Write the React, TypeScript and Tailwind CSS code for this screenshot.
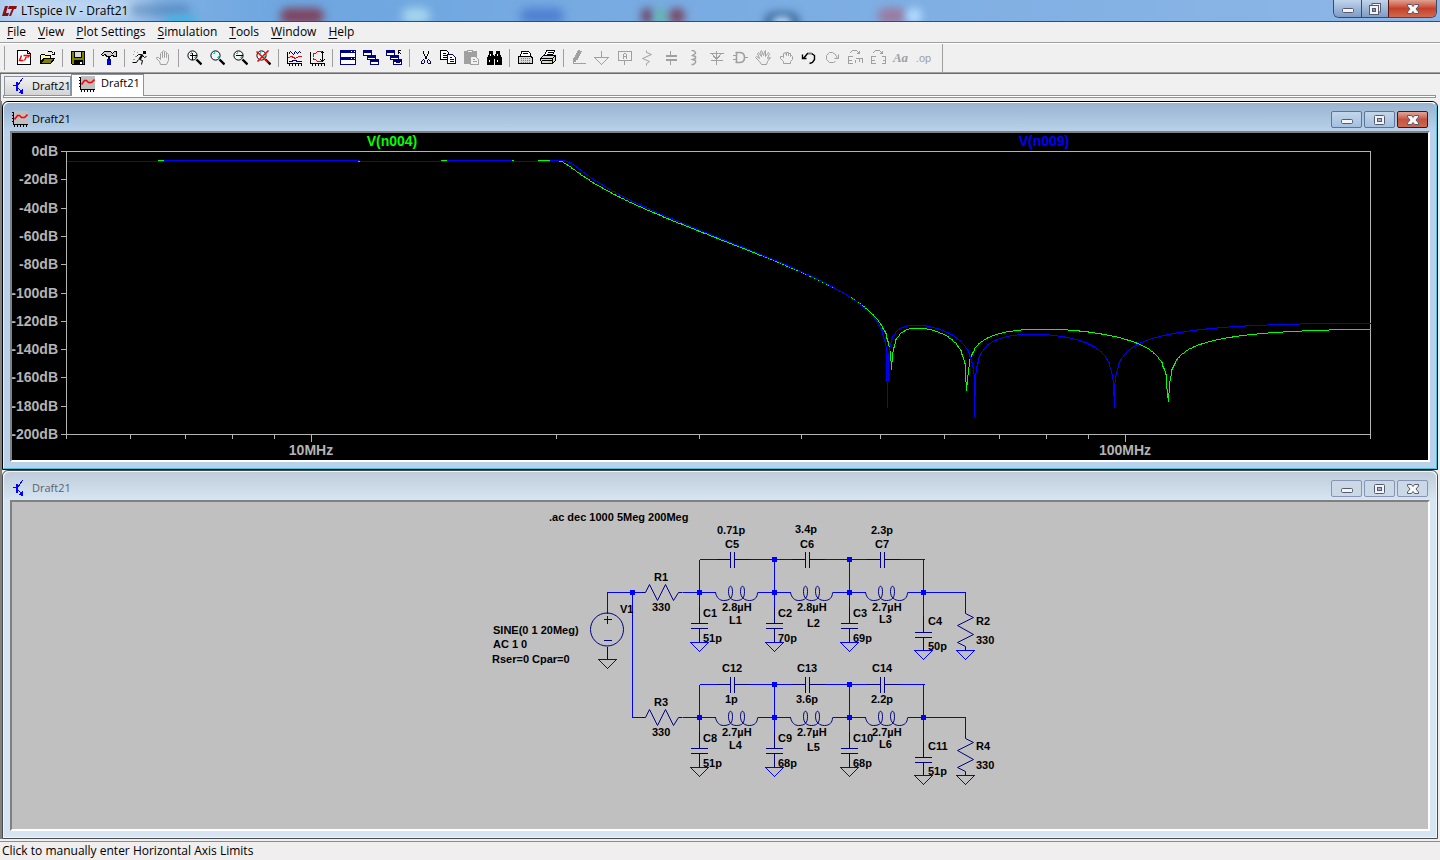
import type { ReactNode } from 'react';
import clsx from 'clsx';

/* ---------- pixel icons ---------- */

const GRAY = '#a0a0a0';
const NAVY = '#000080';

const Px = ({ children, stroke = '#000', size = 16 }: { children: ReactNode; stroke?: string; size?: number }) => (
  <svg
    width={size}
    height={size}
    viewBox="-0.5 -0.5 16 16"
    fill="none"
    stroke={stroke}
    shapeRendering="crispEdges"
    aria-hidden="true"
    className="shrink-0"
  >
    {children}
  </svg>
);

const ChartIcon = () => (
  <Px>
    <rect x="1" y="-0.5" width="14.5" height="13" fill="#c0c0c0" stroke="none" />
    <path d="M1 0V13M-1 1H1M-1 4H1M-1 7H1M-1 10H1M1 13H15M2 13V15M5 13V15M8 13V15M11 13V15M14 13V15" />
    <path d="M2 8L5 4H7L9 6H12L15 3" stroke="#f00" strokeWidth="1.6" shapeRendering="auto" />
  </Px>
);

const TransistorIcon = () => (
  <Px stroke="#00f">
    <path d="M0 7H4M5 7L10 0M5 9L10 14" />
    <path d="M4 3V12" strokeWidth="2" />
    <path d="M10 15V11L7 14Z" fill="#00f" />
  </Px>
);

const Magnifier = ({ children }: { children?: ReactNode }) => (
  <Px>
    <g transform="translate(1 0)">
      <circle cx="5" cy="5" r="4.6" fill="#eefafa" shapeRendering="auto" />
      <path d="M3 3L5 2M7 8L8 6" stroke="#00e0e0" />
      <path d="M9 9L14 14" strokeWidth="2.4" shapeRendering="auto" />
      {children}
    </g>
  </Px>
);

const OpenHand = () => (
  <Px stroke={GRAY}>
    <path
      d="M5 14L4 11L1 8V7H3L5 9V3L6 2L7 3V7V1L8 0L9 1V7V2L10 1L11 2V7V4L12 3L13 4V10L11 14Z"
      shapeRendering="auto"
    />
  </Px>
);

const MiniWindows = () => (
  <>
    <path d="M0 0H8V5H0ZM4 5H12V9H4ZM7 9H15V14H7Z" fill="#fff" />
    <path d="M0 1H8M4 6H12M7 10H15" strokeWidth="2" />
  </>
);

const icons: Record<string, ReactNode> = {
  'New Schematic': (
    <Px>
      <path d="M1 0H11L14 3V14H1Z" fill="#fff" />
      <path d="M11 0V3H14" />
      <path d="M5 5L3 10H7M10 6L8 10" stroke="#f00" strokeWidth="1.4" shapeRendering="auto" />
      <path d="M7 5H13L11 7" stroke="#f00" strokeWidth="1.4" shapeRendering="auto" />
    </Px>
  ),
  Open: (
    <Px>
      <path d="M1 12V5L2 4H5L6 5H11V8H4Z" fill="#ffffa0" />
      <path d="M1 13L5 8H15L11 13Z" fill="#808000" />
      <path d="M8 2L9 1H12L14 3M15 1V4H12" />
    </Px>
  ),
  Save: (
    <Px>
      <path d="M1 1H14V14H2L1 13Z" fill="#808000" />
      <path d="M4 1H11V7H4Z" fill="#d8d8d8" />
      <rect x="3.5" y="9.5" width="9" height="5" fill="#000" stroke="none" />
      <path d="M10 11V13" stroke="#fff" strokeWidth="2" />
    </Px>
  ),
  'Control Panel': (
    <Px>
      <path d="M0 4L3 1H9L11 3L13 1H15V6H13L11 5H10L9 6H5L4 4L1 5Z" fill="#d0d0d0" />
      <path d="M7 6V9" strokeWidth="2" />
      <rect x="6" y="9" width="3" height="5" fill="#00f" stroke="#00a" />
    </Px>
  ),
  Run: (
    <Px>
      <path d="M12 0V3" strokeWidth="3" />
      <path d="M10 4L7 9" strokeWidth="2.4" shapeRendering="auto" />
      <path d="M9 4H6L4 6M10 5L12 7L14 6M7 9L10 10L9 14M6 9L4 12H0" shapeRendering="auto" />
      <path d="M1 1H2M0 4H1M4 2H5M2 6H3M0 9H2" stroke={GRAY} />
    </Px>
  ),
  Halt: <OpenHand />,
  'Zoom In': (
    <Magnifier>
      <path d="M5 2V9M2 5H9" />
    </Magnifier>
  ),
  Pan: <Magnifier />,
  'Zoom Out': (
    <Magnifier>
      <path d="M2 5H9" />
    </Magnifier>
  ),
  'Zoom Full': (
    <Magnifier>
      <path d="M0 1L12 12M12 0L1 11" stroke="#f00" strokeWidth="1.6" shapeRendering="auto" />
    </Magnifier>
  ),
  Autorange: (
    <Px>
      <path d="M1 1V13H15M0 3H1M0 6H1M0 9H1M0 12H1M3 13V15M6 13V15M9 13V15M12 13V15M15 13V15" />
      <path d="M2 4L4 1L7 4L9 1L11 3L13 1L15 3" stroke={NAVY} />
      <path d="M2 7L5 6L9 8L12 6H15" stroke="#f00" />
      <path d="M2 11H6V10H10V11H15" stroke={NAVY} />
    </Px>
  ),
  'Plot Limits': (
    <Px>
      <path d="M1 1V13H15M0 3H1M0 6H1M0 9H1M0 12H1M3 13V15M6 13V15M9 13V15M12 13V15M15 13V15" />
      <path d="M4 6V3H6L8 1H12M4 7V9H6L8 11H12" stroke="#f00" />
      <path d="M13 1V11M11 3L13 1L15 3M11 9L13 11L15 9" />
    </Px>
  ),
  Tile: (
    <Px stroke={NAVY}>
      <path d="M0 0H15V7H0ZM0 7H15V14H0Z" fill="#fff" />
      <path d="M0 1H15M0 8H15" strokeWidth="3" />
      <path d="M10 1H11M13 1H14M10 8H11M13 8H14" stroke="#fff" />
    </Px>
  ),
  Cascade: (
    <Px stroke={NAVY}>
      <MiniWindows />
    </Px>
  ),
  'Close All': (
    <Px stroke={NAVY}>
      <MiniWindows />
      <path d="M9 12H13" />
      <path d="M11 0H14M12 0V3M12 1L15 4" stroke="#000" />
    </Px>
  ),
  Cut: (
    <Px>
      <path d="M6 0V3L10 9M11 0V3L7 9" />
      <path d="M6 9L4 11V13H6L7 12V9M10 9V12L11 13H13V11L11 9" stroke={NAVY} />
    </Px>
  ),
  Copy: (
    <Px>
      <path d="M0 0H6L8 2V9H0Z" fill="#fff" />
      <path d="M2 3H5M2 5H6M2 7H6" />
      <path d="M7 4H12L15 7V13H7Z" fill="#fff" stroke={NAVY} />
      <path d="M9 7H11M9 9H13M9 11H13" stroke={NAVY} />
    </Px>
  ),
  Paste: (
    <Px stroke={GRAY}>
      <path d="M1 1H13V6H7V13H1Z" fill={GRAY} />
      <path d="M4 0H9V2H4Z" fill="#f0f0f0" />
      <path d="M7 6H12L15 9V14H7Z" fill="#f0f0f0" />
      <path d="M9 9H11M9 11H13" />
    </Px>
  ),
  Find: (
    <Px>
      <path d="M3 1H6V4L7 6V14H1V8L3 4ZM10 1H13V4L15 8V14H9V6Z" fill="#000" />
      <path d="M6 7H10" strokeWidth="3" />
      <path d="M4 3V5M11 3V5M3 9V11M11 9V11" stroke="#fff" />
    </Px>
  ),
  'Print Setup': (
    <Px>
      <path d="M3 6L4 1H11L13 3V6" fill="#fff" />
      <path d="M1 6H14L15 8V13H1Z" fill="#d8d8d8" />
      <path d="M5 3H10" />
      <path d="M3 8H13M3 10H13M3 12H13" strokeDasharray="1 1" stroke="#808080" />
    </Px>
  ),
  Print: (
    <Px>
      <path d="M4 5L6 0H14L12 5Z" fill="#fff" />
      <path d="M7 2H12M6 4H11" />
      <path d="M0 8L3 5H15V10L12 13H1Z" fill="#d8d8d8" />
      <path d="M0 8H12V13M12 8L15 5M1 10H11" />
      <path d="M8 11H10" stroke="#e0e000" strokeWidth="2" />
    </Px>
  ),
  Wire: (
    <Px stroke={GRAY}>
      <path d="M2 9L7 0L10 1L5 10L2 12Z" fill={GRAY} />
      <path d="M1 13H14" />
    </Px>
  ),
  Ground: (
    <Px stroke={GRAY}>
      <path d="M7 0V7M0 7H14L7 14Z" />
      <path d="M1 8L7 14L13 8" />
    </Px>
  ),
  'Label Net': (
    <Px stroke={GRAY}>
      <path d="M1 1H14V10H1ZM7 10V14" strokeWidth="1.4" />
      <path d="M6 8V4L7 3H8L9 4V8M6 6H9" />
    </Px>
  ),
  Resistor: (
    <Px stroke={GRAY}>
      <path d="M6 0V2L11 4L2 8L9 11L6 13V15" shapeRendering="auto" />
    </Px>
  ),
  Capacitor: (
    <Px stroke={GRAY}>
      <path d="M7 0V5M7 9V14" />
      <path d="M2 5.5H13M2 9.5H13" strokeWidth="2" />
    </Px>
  ),
  Inductor: (
    <Px stroke={GRAY}>
      <path d="M5 0H7L9 2V3L6 5L9 6V8L6 9L9 10V12L7 14H5" shapeRendering="auto" strokeWidth="1.4" />
    </Px>
  ),
  Diode: (
    <Px stroke={GRAY}>
      <path d="M7 0V14M0 3H14M2 3L7 9L12 3M1 10H13" />
      <path d="M3 4L7 9L11 4" />
    </Px>
  ),
  Component: (
    <Px stroke={GRAY}>
      <path d="M0 5H3M0 9H3M12 7H15" />
      <path d="M3 2H7C10 2 12 4 12 7C12 10 10 12 7 12H3M4 2V12" strokeWidth="1.6" shapeRendering="auto" />
    </Px>
  ),
  Move: (
    <Px stroke={GRAY}>
      <path
        d="M6 14L4 11L0 7L1 6L4 8L2 3L3 2L6 6L5 1L6 0L8 5L9 1L10 0V6L13 2L14 3L12 8L15 7L12 11L11 14Z"
        shapeRendering="auto"
      />
    </Px>
  ),
  Drag: (
    <Px stroke={GRAY}>
      <path
        d="M5 13V11L2 8V6H4L5 7V3L7 2L8 5V2H10V5V3H12V6L13 5L14 6V9L12 11V13Z"
        shapeRendering="auto"
      />
    </Px>
  ),
  Undo: (
    <Px>
      <path d="M1 4V8H5M2 8L6 3H10L13 5V9L11 12L8 13" strokeWidth="1.4" shapeRendering="auto" />
      <path d="M6 3H10" stroke="#808000" />
    </Px>
  ),
  Redo: (
    <Px stroke={GRAY}>
      <path d="M14 4V8H10M13 8L11 4L8 2H5L2 5V9L5 12H9L11 11" shapeRendering="auto" />
    </Px>
  ),
  Rotate: (
    <Px stroke={GRAY}>
      <path d="M2 3L5 0H9L12 3M12 0V3H9" />
      <path d="M5 6H1V13H5M1 10H4M8 9V12M8 8H15V12M12 8V11" strokeWidth="1.4" />
    </Px>
  ),
  Mirror: (
    <Px stroke={GRAY}>
      <path d="M2 3L5 0H9L12 3M12 0V3H9" />
      <path d="M5 6H1V13H5M1 10H4M11 6H15V13H11M15 10H12" strokeWidth="1.4" />
    </Px>
  ),
  Text: <span className="font-['Liberation_Serif',serif] text-[13px] font-bold italic text-[#a0a0a0]">Aa</span>,
  'SPICE Directive': <span className="font-['Liberation_Sans',sans-serif] text-[11px] text-[#a0a0a0]">.op</span>,
};

const toolbar = [
  ['New Schematic', 'Open'],
  ['Save'],
  ['Control Panel'],
  ['Run', 'Halt'],
  ['Zoom In', 'Pan', 'Zoom Out', 'Zoom Full'],
  ['Autorange', 'Plot Limits'],
  ['Tile', 'Cascade', 'Close All'],
  ['Cut', 'Copy', 'Paste', 'Find'],
  ['Print Setup', 'Print'],
  [
    'Wire', 'Ground', 'Label Net', 'Resistor', 'Capacitor', 'Inductor', 'Diode', 'Component',
    'Move', 'Drag', 'Undo', 'Redo', 'Rotate', 'Mirror', 'Text', 'SPICE Directive',
  ],
];

/* ---------- window chrome ---------- */

const MinimizeGlyph = () => (
  <svg width="12" height="12" viewBox="0 0 12 12" aria-hidden="true">
    <rect x="0.5" y="5.5" width="11" height="4" rx="1" fill="#f4f4f4" stroke="#565a6e" />
  </svg>
);

const MaximizeGlyph = () => (
  <svg width="12" height="12" viewBox="0 0 12 12" aria-hidden="true">
    <rect x="0.5" y="1.5" width="10" height="9" rx="1" fill="#f4f4f4" stroke="#565a6e" />
    <rect x="3.5" y="4.5" width="4" height="3" fill="#9db6d6" stroke="#565a6e" />
  </svg>
);

const RestoreGlyph = () => (
  <svg width="12" height="12" viewBox="0 0 12 12" aria-hidden="true">
    <rect x="3" y="0.5" width="8.5" height="8.5" fill="#f4f4f4" stroke="#565a6e" />
    <rect x="0.5" y="2.5" width="9" height="9" fill="#f4f4f4" stroke="#565a6e" />
    <rect x="3.5" y="5.5" width="3" height="3" fill="#7c98be" stroke="#565a6e" />
  </svg>
);

const CloseGlyph = () => (
  <svg width="12" height="12" viewBox="0 0 12 12" aria-hidden="true">
    <path d="M0.5 1.5H4.5L6 3.5L7.5 1.5H11.5V3L9 6L11.5 9V10.5H7.5L6 8.5L4.5 10.5H0.5V9L3 6L0.5 3Z" fill="#f8f8f8" stroke="#565a6e" />
  </svg>
);

// wallpaper showing through the glass title bar
const smudges = [
  'left-0 -top-1 h-6 w-[150px] bg-[#e4eefa]/80 blur-md',
  'left-[130px] top-1 h-3 w-[60px] bg-[#3f74ad]/50 blur-[4px]',
  'left-[165px] top-4 h-3 w-8 bg-[#3fb4e0] blur-[4px]',
  'left-[280px] top-2 h-4 w-11 bg-[#7d4560] blur-[4px]',
  'left-[402px] top-2 h-4 w-7 bg-[#a6d6ee] blur-[5px]',
  'left-[520px] top-2 h-4 w-11 bg-[#4f80d0] blur-[5px]',
  'left-[641px] top-2 h-4 w-3 bg-[#6d4668] blur-[4px]',
  'left-[655px] top-2 h-4 w-3 bg-[#62b8ac] blur-[4px]',
  'left-[669px] top-2 h-4 w-4 bg-[#7a4460] blur-[4px]',
  'left-[764px] top-3 h-5 w-9 bg-[#3f6c9e] blur-[4px]',
  'left-[772px] top-4 h-4 w-5 bg-[#a8cdf0] blur-[3px]',
  'left-[878px] top-2 h-4 w-7 bg-[#9a7ba0] blur-[4px]',
  'left-[906px] top-2 h-4 w-4 bg-[#b4dcff] blur-[4px]',
];

const TitleBar = () => (
  <header className="relative flex h-[22px] items-start justify-between overflow-hidden border-b border-[#3c4a66] bg-linear-to-r from-[#9cc2ea] via-[#6ea6e0] to-[#b8d3f0]">
    <div className="absolute inset-0 bg-linear-to-r from-[#6ea6e0]/0 via-[#6ea6e0] via-20% to-[#8db6e6]" />
    {smudges.map((s) => (
      <span key={s} className={clsx('absolute rounded-full', s)} />
    ))}
    <div className="relative flex h-[21px] items-center gap-1 pl-0.5">
      <svg width="15" height="12" viewBox="0 0 15 12" aria-hidden="true">
        <path d="M3 1H6L4 8H7L6 11H0ZM7 1H15L14 4H12L9 11H7L10 4H6Z" fill="#8a0f14" />
      </svg>
      <h1 className="text-xs">LTspice IV - Draft21</h1>
    </div>
    <div className="relative mr-[3px] flex h-[18px] overflow-hidden rounded-b-md border border-t-0 border-[#3c4a66]">
      <button aria-label="Minimize" className="flex w-7 items-center justify-center border-r border-[#3c4a66] bg-linear-to-b from-[#c0d4ec] to-[#7e9cc4]">
        <MinimizeGlyph />
      </button>
      <button aria-label="Restore" className="flex w-[26px] items-center justify-center bg-linear-to-b from-[#c0d4ec] to-[#7e9cc4]">
        <RestoreGlyph />
      </button>
      <button aria-label="Close" className="flex w-12 items-center justify-center border-l border-[#5a1410] bg-linear-to-b from-[#e0a090] via-[#c4402c] to-[#d0684c]">
        <CloseGlyph />
      </button>
    </div>
  </header>
);

const menus = ['File', 'View', 'Plot Settings', 'Simulation', 'Tools', 'Window', 'Help'];

const MenuBar = () => (
  <nav className="flex h-[22px] items-center border-b border-white bg-[#f0f0f0] pb-0.5 pl-px shadow-[inset_0_-1px_0_#a0a0a0]">
    {menus.map((m) => (
      <button key={m} className="px-1.5 text-xs">
        <span className="underline underline-offset-2">{m[0]}</span>
        {m.slice(1)}
      </button>
    ))}
  </nav>
);

const Toolbar = () => (
  <div className="flex h-[30px] border-b border-[#696969] bg-[#f0f0f0] shadow-[inset_0_-1px_0_#a0a0a0]">
    <div className="flex h-7 items-center border-r border-[#a0a0a0] pr-[7px]">
      <span className="ml-0.5 mr-[7px] h-6 w-[3px] border-r border-[#a0a0a0]" />
      {toolbar.map((group, i) => (
        <div key={i} className="flex items-center">
          {i > 0 && <span className="mx-[3px] h-[18px] w-0.5 border-r border-[#a0a0a0]" />}
          {group.map((name) => (
            <button key={name} aria-label={name} className="flex h-[22px] w-[23px] items-center justify-center">
              {icons[name]}
            </button>
          ))}
        </div>
      ))}
    </div>
  </div>
);

const DocTabs = () => (
  <div className="h-[27px] pl-0.5">
    <div className="flex h-[21px] items-end pl-px" role="tablist">
      <button
        role="tab"
        aria-selected="false"
        className="flex h-[19px] w-[67px] items-center gap-1 border border-b-0 border-[#8c92a0] bg-linear-to-b from-[#f2f2f2] to-[#d4d4d4] pl-[7px] text-[11px]"
      >
        <TransistorIcon />
        Draft21
      </button>
      <button
        role="tab"
        aria-selected="true"
        className="relative z-10 -mb-px flex h-[22px] w-[73px] items-center gap-1.5 border border-b-0 border-[#8c92a0] bg-white pb-1 pl-[7px] text-[11px]"
      >
        <ChartIcon />
        Draft21
      </button>
    </div>
    <div className="mr-1 h-[3px] border border-[#8c92a0] bg-white" />
  </div>
);

const ChildWindow = ({ active, icon, title, children }: { active?: boolean; icon: ReactNode; title: string; children: ReactNode }) => {
  const btn = clsx(
    'flex h-[17px] w-[31px] items-center justify-center rounded-xs border',
    active ? 'border-[#5f7396] bg-linear-to-b from-[#c3d6ea] to-[#a3bfdf]' : 'border-[#8794b4] bg-[#cbd8e6]',
  );
  return (
    <section className={clsx('flex flex-col rounded-t-md border', active ? 'border-black' : 'border-[#4a4a4a]')}>
      <div
        className={clsx(
          'flex flex-1 flex-col rounded-t-md border px-1.5 pb-1.5',
          active ? 'border-t-white border-l-[#dff3fb] border-r-[#2ccbe6] border-b-[#2ccbe6] bg-[#b9d1ea]' : 'border-[#eef4fa] bg-[#d7e4f2]',
        )}
      >
        <div
          className={clsx(
            '-mx-1.5 flex h-7 justify-between rounded-t-md pl-2 pr-2 bg-linear-to-b',
            active ? 'from-[#99b4d1] to-[#b9d1ea]' : 'from-[#bfcddb] to-[#d7e4f2]',
          )}
        >
          <div className={clsx('flex items-center gap-1 pt-1 text-[11px]', !active && 'text-[#5a626c]')}>
            {icon}
            <h2 className="pt-px">{title}</h2>
          </div>
          <div className="flex gap-0.5 pt-2">
            <button aria-label="Minimize" className={btn}>
              <MinimizeGlyph />
            </button>
            <button aria-label="Maximize" className={btn}>
              <MaximizeGlyph />
            </button>
            <button
              aria-label="Close"
              className={
                active
                  ? 'flex h-[17px] w-[31px] items-center justify-center rounded-xs border border-[#4c1016] bg-linear-to-b from-[#e2a598] via-[#c4523e] to-[#cc6a50]'
                  : btn
              }
            >
              <CloseGlyph />
            </button>
          </div>
        </div>
        <div className="flex flex-1 flex-col border-2 border-t-[#808080] border-l-[#808080] border-r-white border-b-white">{children}</div>
      </div>
    </section>
  );
};

/* ---------- waveform ---------- */

// one elliptic ladder: shunt caps at the four nodes, LC tanks between them
interface Ladder {
  shunt: number[];
  tankL: number[];
  tankC: number[];
}

const upper: Ladder = { shunt: [51, 70, 69, 50], tankL: [2.8, 2.8, 2.7], tankC: [0.71, 3.4, 2.3] };
const lower: Ladder = { shunt: [51, 68, 68, 51], tankL: [2.7, 2.7, 2.7], tankC: [1, 3.6, 2.2] };

type Cx = [number, number];
const mul = (a: Cx, b: Cx): Cx => [a[0] * b[0] - a[1] * b[1], a[0] * b[1] + a[1] * b[0]];
const add = (a: Cx, b: Cx): Cx => [a[0] + b[0], a[1] + b[1]];
const inv = (a: Cx): Cx => {
  const m = a[0] * a[0] + a[1] * a[1];
  return [a[0] / m, -a[1] / m];
};

const R = 330;
const R_IND = 1e-3;

// gain in dB, walking from the load back to the source
const gain = (f: number, net: Ladder) => {
  const w = 2 * Math.PI * f;
  let v: Cx = [1, 0];
  let i: Cx = [1 / R, 0];
  for (let k = 3; k >= 0; k--) {
    i = add(i, mul(v, [0, w * net.shunt[k] * 1e-12]));
    if (k === 0) break;
    // tanks are stored left to right
    const y = add(inv([R_IND, w * net.tankL[k - 1] * 1e-6]), [0, w * net.tankC[k - 1] * 1e-12]);
    v = add(v, mul(i, inv(y)));
  }
  v = add(v, mul(i, [R, 0]));
  return -20 * Math.log10(Math.hypot(v[0], v[1]));
};

const LEFT = 66;
const RIGHT = 1370;
const TOP = 151;
const BOTTOM = 434;
const F0 = 5e6;
const F1 = 200e6;

const xOf = (f: number) => LEFT + ((RIGHT - LEFT) * Math.log10(f / F0)) / Math.log10(F1 / F0);
const yOf = (db: number) => TOP + ((BOTTOM - TOP) * -db) / 200;

const trace = (net: Ladder) => {
  const pts: string[] = [];
  for (let k = 0; k <= 1602; k++) {
    const f = F0 * 10 ** (k / 1000);
    pts.push(`${Math.round(xOf(f))},${Math.round(yOf(gain(f, net)))}`);
  }
  return pts.join(' ');
};

const dbTicks = [0, -20, -40, -60, -80, -100, -120, -140, -160, -180, -200];
const freqTicks = [5, 6, 7, 8, 9, 10, 20, 30, 40, 50, 60, 70, 80, 90, 100, 200];

const Waveform = () => (
  <svg viewBox="11.5 132.5 1416 327" className="block w-full flex-1 bg-black font-['Liberation_Sans',sans-serif] text-sm font-bold">
    <g stroke="#b4b4b4" fill="none" shapeRendering="crispEdges">
      <rect x={LEFT} y={TOP} width={RIGHT - LEFT} height={BOTTOM - TOP} />
      {dbTicks.map((d) => (
        <path key={d} d={`M60 ${Math.round(yOf(d))}H66`} />
      ))}
      {freqTicks.map((f) => (
        <path key={f} d={`M${Math.round(xOf(f * 1e6))} 434V${f === 10 || f === 100 ? 441 : 438}`} />
      ))}
    </g>
    <g transform="translate(-0.5 -0.5)" fill="#b4b4b4">
      {dbTicks.map((d) => (
        <text key={d} x="58" y={Math.round(yOf(d)) + 5} textAnchor="end">
          {d}dB
        </text>
      ))}
      <text x="311" y="455" textAnchor="middle">10MHz</text>
      <text x="1125" y="455" textAnchor="middle">100MHz</text>
      <text x="392" y="146" textAnchor="middle" fill="#0f0">V(n004)</text>
      <text x="1044" y="146" textAnchor="middle" fill="#00f">V(n009)</text>
    </g>
    <g fill="none" shapeRendering="crispEdges">
      <polyline points={trace(upper)} stroke="#0f0" />
      <polyline points={trace(lower)} stroke="#00f" />
    </g>
  </svg>
);

/* ---------- schematic ---------- */

const Dot = ({ x, y }: { x: number; y: number }) => <rect x={x - 2} y={y - 2} width="4" height="4" fill="#00f" stroke="#00f" />;

const Ground = ({ x, y }: { x: number; y: number }) => <path d={`M${x - 9} ${y}H${x + 9}L${x} ${y + 9}Z`} stroke="#00f" />;

const ShuntCap = ({ x, y, gnd }: { x: number; y: number; gnd: number }) => (
  <>
    <path d={`M${x} ${y - 17}V${y}M${x - 9} ${y}H${x + 8}M${x - 9} ${y + 5}H${x + 8}M${x} ${y + 5}V${gnd}`} />
    <Ground x={x} y={gnd} />
  </>
);

// series tank between two nodes that are 75px apart
const Tank = ({ x }: { x: number }) => (
  <>
    <path d={`M${x} 559H${x + 17}M${x + 50} 559H${x + 75}M${x} 592H${x + 16}M${x + 58} 592H${x + 75}`} stroke="#00f" />
    <path d={`M${x + 17} 559H${x + 31}M${x + 31} 551V567M${x + 35} 551V567M${x + 35} 559H${x + 50}`} />
    <path
      transform={`translate(${x} 0)`}
      shapeRendering="auto"
      d="M16 592C17 597 20 600 24 600C31 600 33 597 33 591C33 584 29 584 29 591C29 597 32 600 37 600C43 600 45 597 45 591C45 584 41 584 41 591C41 597 45 600 50 600C55 600 58 597 58 592"
    />
  </>
);

const LadderDrawing = () => (
  <>
    <path d="M641 592H645L649 584L657 600L665 584L673 600L678 592H682" shapeRendering="auto" />
    <path d="M632 592H641M682 592H699M699 559V607M774 559V607M849 559V607M923 559V615M923 592H965V610" stroke="#00f" />
    <Tank x={699} />
    <Tank x={774} />
    <Tank x={849} />
    <ShuntCap x={699} y={623} gnd={642} />
    <ShuntCap x={774} y={623} gnd={642} />
    <ShuntCap x={849} y={623} gnd={642} />
    <ShuntCap x={923} y={632} gnd={650} />
    <path d="M965 610V613L973 617L957 625L973 634L957 642L965 646V650" shapeRendering="auto" />
    <Ground x={965} y={650} />
    <Dot x={699} y={592} />
    <Dot x={774} y={559} />
    <Dot x={774} y={592} />
    <Dot x={849} y={559} />
    <Dot x={849} y={592} />
    <Dot x={923} y={592} />
  </>
);

const labels: [number, number, string][] = [
  [549, 521, '.ac dec 1000 5Meg 200Meg'],
  [493, 634, 'SINE(0 1 20Meg)'],
  [493, 648, 'AC 1 0'],
  [492, 663, 'Rser=0 Cpar=0'],
  [620, 613, 'V1'],
  [654, 581, 'R1'], [652, 611, '330'],
  [717, 534, '0.71p'], [725, 548, 'C5'],
  [795, 533, '3.4p'], [800, 548, 'C6'],
  [871, 534, '2.3p'], [875, 548, 'C7'],
  [722, 611, '2.8µH'], [729, 624, 'L1'],
  [797, 611, '2.8µH'], [807, 627, 'L2'],
  [872, 611, '2.7µH'], [879, 623, 'L3'],
  [703, 617, 'C1'], [703, 642, '51p'],
  [778, 617, 'C2'], [778, 642, '70p'],
  [853, 617, 'C3'], [853, 642, '69p'],
  [928, 625, 'C4'], [928, 650, '50p'],
  [976, 625, 'R2'], [976, 644, '330'],
  [654, 706, 'R3'], [652, 736, '330'],
  [722, 672, 'C12'], [725, 703, '1p'],
  [797, 672, 'C13'], [796, 703, '3.6p'],
  [872, 672, 'C14'], [871, 703, '2.2p'],
  [722, 736, '2.7µH'], [729, 749, 'L4'],
  [797, 736, '2.7µH'], [807, 751, 'L5'],
  [872, 736, '2.7µH'], [879, 748, 'L6'],
  [703, 742, 'C8'], [703, 767, '51p'],
  [778, 742, 'C9'], [778, 767, '68p'],
  [853, 742, 'C10'], [853, 767, '68p'],
  [928, 750, 'C11'], [928, 775, '51p'],
  [976, 750, 'R4'], [976, 769, '330'],
];

const Schematic = () => (
  <svg viewBox="11.5 501.5 1416 327" className="block w-full flex-1 bg-[#c0c0c0] font-['Liberation_Sans',sans-serif] text-[11px] font-bold">
    <g fill="none" stroke={NAVY} shapeRendering="crispEdges">
      <path d="M607 613V592H632V717H641" stroke="#00f" />
      <circle cx="606.5" cy="629" r="16.5" shapeRendering="auto" />
      <path d="M603 619H611M607 615V623M603 640H611M607 646V659" />
      <Ground x={607} y={659} />
      <LadderDrawing />
      <g transform="translate(0 125)">
        <LadderDrawing />
      </g>
      <Dot x={632} y={592} />
    </g>
    <g transform="translate(-0.5 -0.5)">
      {labels.map(([x, y, t]) => (
        <text key={`${x}-${y}`} x={x} y={y}>
          {t}
        </text>
      ))}
    </g>
  </svg>
);

export default function App() {
  return (
    <div className="flex min-h-screen flex-col bg-[#f0f0f0] font-['Open_Sans','Noto_Sans',sans-serif] text-black">
      <TitleBar />
      <MenuBar />
      <Toolbar />
      <div className="flex flex-1 flex-col border-l border-[#808080]">
        <DocTabs />
        <main className="mr-0.5 grid flex-1 grid-rows-2 border-l border-[#808080]">
          <ChildWindow active icon={<ChartIcon />} title="Draft21">
            <Waveform />
          </ChildWindow>
          <ChildWindow icon={<TransistorIcon />} title="Draft21">
            <Schematic />
          </ChildWindow>
        </main>
      </div>
      <footer className="mt-0.5 flex h-[19px] items-center border-t border-[#8c8c8c] bg-[#f0eeee] pl-0.5 text-xs">
        Click to manually enter Horizontal Axis Limits
      </footer>
    </div>
  );
}
